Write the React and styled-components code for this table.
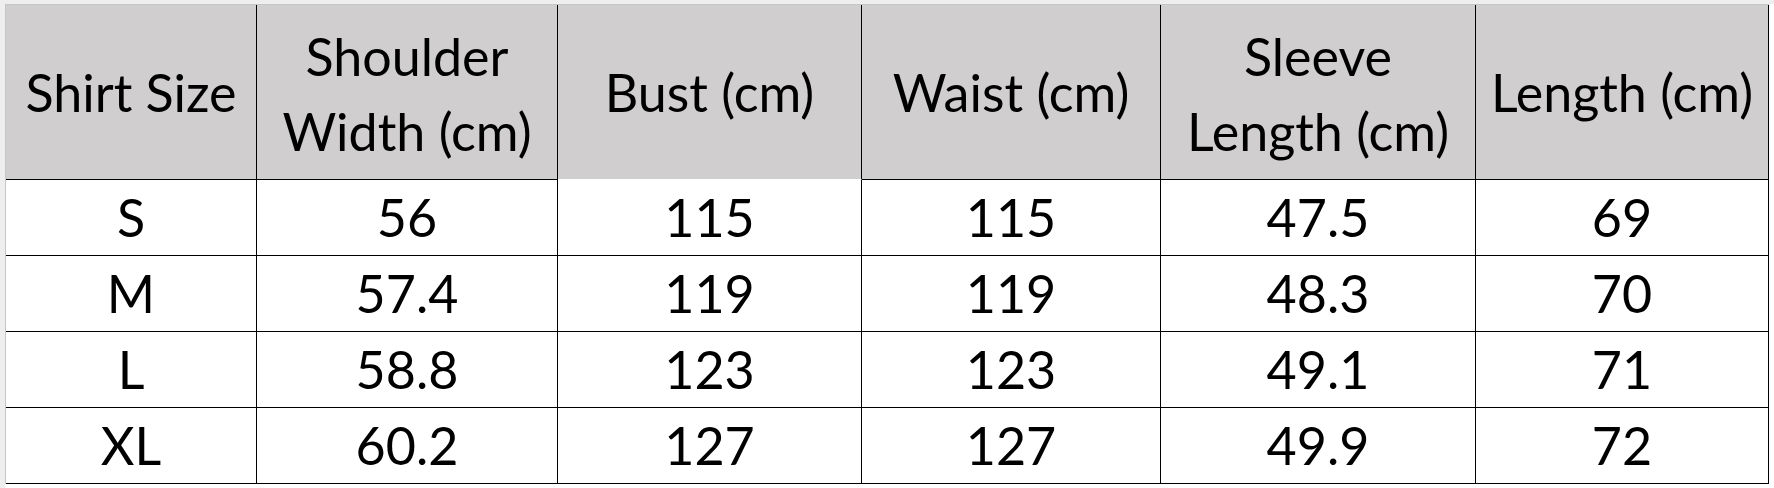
import React from "react";
import styled, { createGlobalStyle } from "styled-components";

const Global = createGlobalStyle`
  html, body { margin: 0; padding: 0; background: #ffffff; }
  body { font-family: Lato, "Liberation Sans", sans-serif; }
`;

const Sheet = styled.div`
  width: 1774px;
  height: 488px;
  box-sizing: border-box;
  background: #ffffff;
  border-top: 4px solid #eeeeee;
  border-left: 5px solid #eeeeee;
  overflow: hidden;
`;

const Table = styled.div`
  display: grid;
  grid-template-columns: 251px 301px 304px 299px 315px 293px;
  grid-template-rows: 175px repeat(4, 76px);
  border-top: 1px solid #c6c6c6;
  border-left: 1px solid #c6c6c6;
  width: max-content;
`;

const Cell = styled.div`
  box-sizing: border-box;
  display: flex;
  align-items: center;
  justify-content: center;
  text-align: center;
  border-right: 1px solid #000000;
  border-bottom: 1px solid ${(p) => (p.$openBottom ? "#ffffff" : "#000000")};
  background: ${(p) => (p.$head ? "#d0cece" : "#ffffff")};
  color: #000000;
  font-size: 52px;
  line-height: 75px;
  white-space: nowrap;
`;

const Lines = styled.div`
  display: flex;
  flex-direction: column;
  align-items: center;
  padding-top: ${(p) => (p.$multi ? "3px" : "0")};
`;

const headers = [
  { lines: ["Shirt Size"] },
  { lines: ["Shoulder", "Width (cm)"] },
  { lines: ["Bust (cm)"], open: true },
  { lines: ["Waist (cm)"] },
  { lines: ["Sleeve", "Length (cm)"] },
  { lines: ["Length (cm)"] },
];

const rows = [
  ["S", "56", "115", "115", "47.5", "69"],
  ["M", "57.4", "119", "119", "48.3", "70"],
  ["L", "58.8", "123", "123", "49.1", "71"],
  ["XL", "60.2", "127", "127", "49.9", "72"],
];

export default function App() {
  return (
    <>
      <Global />
      <Sheet>
        <Table>
          {headers.map((h, i) => (
            <Cell key={"h" + i} $head $openBottom={h.open}>
              <Lines $multi={h.lines.length > 1}>
                {h.lines.map((l) => (
                  <span key={l}>{l}</span>
                ))}
              </Lines>
            </Cell>
          ))}
          {rows.map((r, ri) =>
            r.map((v, ci) => <Cell key={ri + "-" + ci}>{v}</Cell>)
          )}
        </Table>
      </Sheet>
    </>
  );
}
